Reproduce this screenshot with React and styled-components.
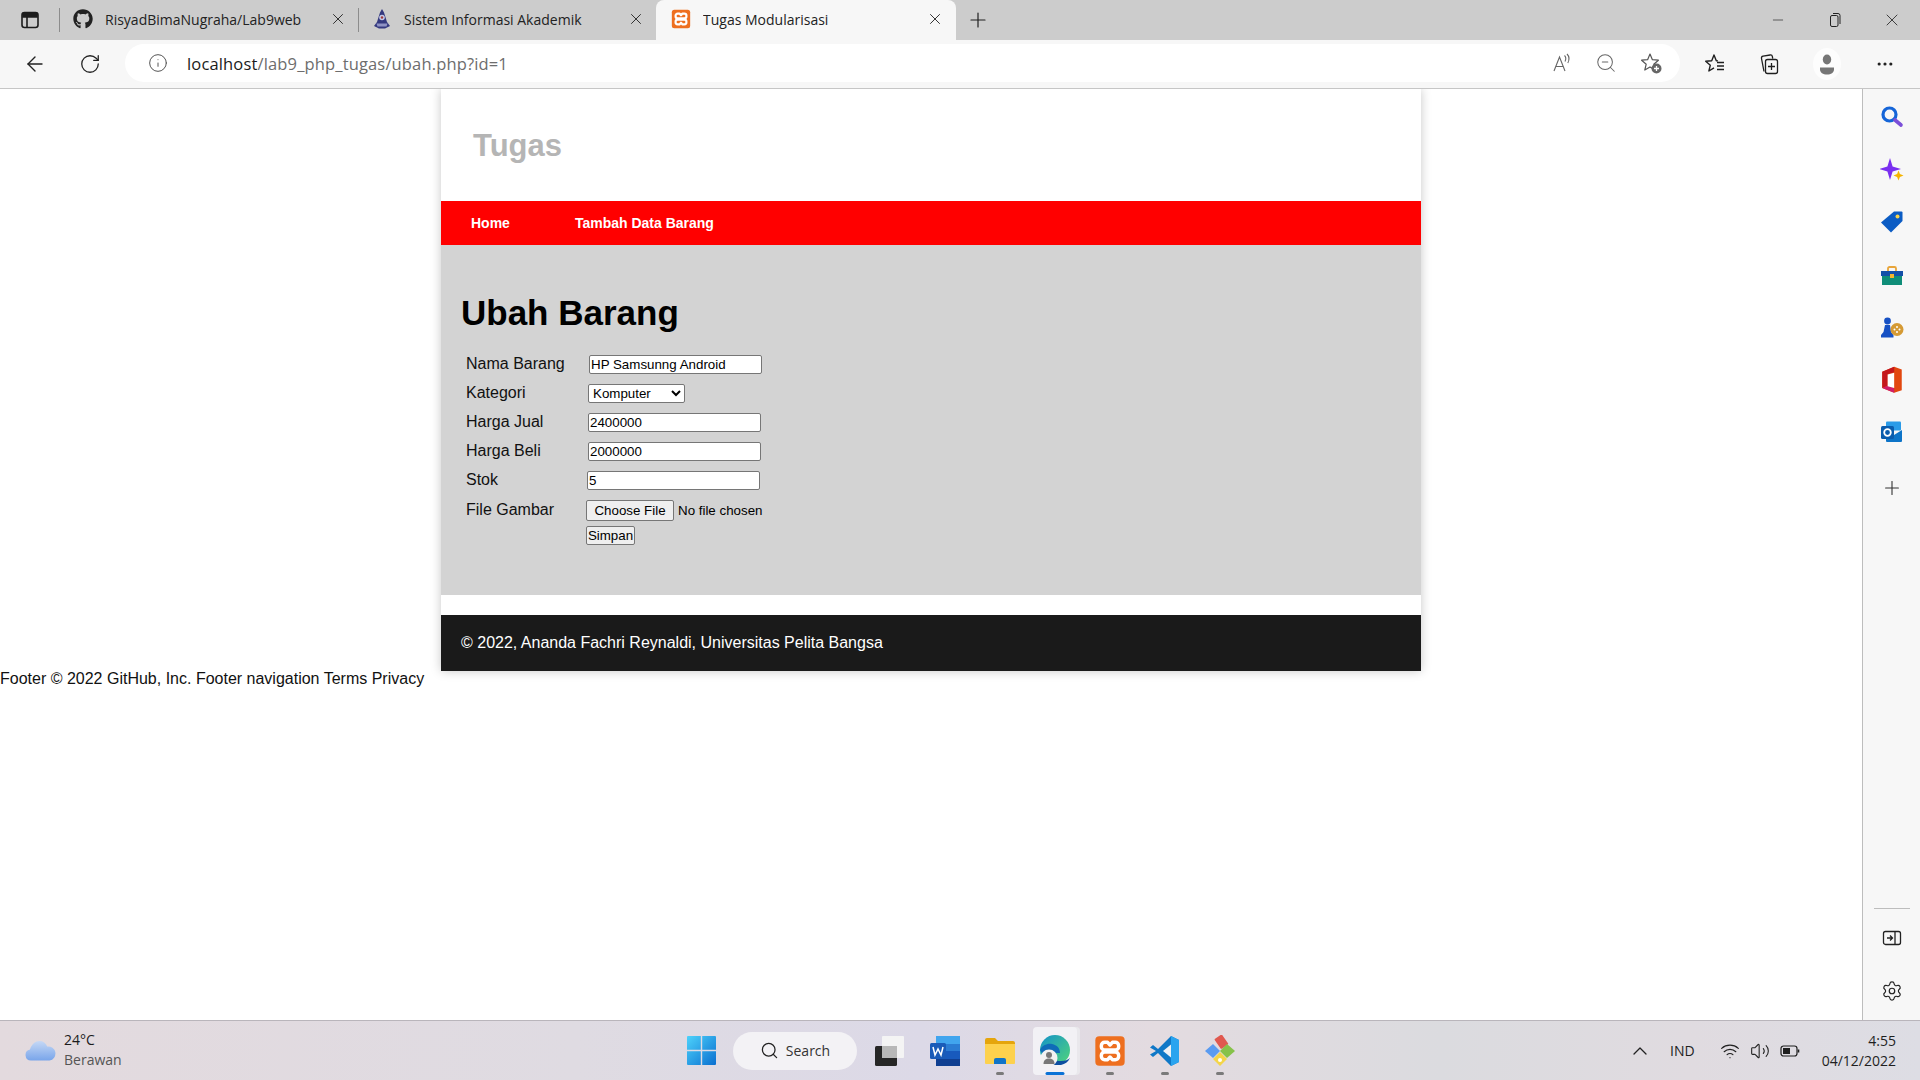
import React from 'react'
import styled, { createGlobalStyle } from 'styled-components'
import {
  ArrowLeft,
  RotateCw,
  Info,
  ZoomOut,
  X,
  Plus,
  Minus,
  ChevronUp,
  Search,
  Settings,
  MoreHorizontal,
  Wifi,
  Volume2,
} from 'lucide-react'
import { FaGithub } from 'react-icons/fa'

const GlobalStyle = createGlobalStyle`
  html, body { margin: 0; padding: 0; background: #fff; overflow: hidden; }
  body { font-family: "Liberation Sans", Arial, sans-serif; color: #000; }
`

const UI_FONT = '"Open Sans", "Noto Sans", sans-serif'

/* ---------- drawn icons ---------- */
const XamppIcon = ({ size = 20 }) => (
  <svg width={size} height={size} viewBox="0 0 24 24">
    <rect x="1" y="1" width="22" height="22" rx="3" fill="#ee6f1f" />
    <g fill="none" stroke="#fff" strokeWidth="2.6" strokeLinejoin="round">
      <path d="M8 5.500h2.200l1.800 2 1.800-2H16a2.500 2.500 0 0 1 2.500 2.500v.8a2.500 2.500 0 0 1-2.500 2.500H8a2.500 2.500 0 0 1-2.500-2.500V8A2.500 2.500 0 0 1 8 5.500z" />
      <path d="M8 18.500h2.200l1.800-2 1.800 2H16a2.500 2.500 0 0 0 2.500-2.500v-.8a2.500 2.500 0 0 0-2.500-2.500H8a2.500 2.500 0 0 0-2.500 2.500v.8A2.500 2.500 0 0 0 8 18.500z" />
    </g>
  </svg>
)

const CrestIcon = () => (
  <svg width="20" height="20" viewBox="0 0 20 20">
    <path d="M10 0l2 3.500 3 9.500 3 4-5 2.500H7L2 17l3-4 3-9.500z" fill="#34397f" />
    <circle cx="10" cy="8.500" r="2.800" fill="#c5c8e6" />
    <circle cx="10" cy="8.500" r="1.200" fill="#a13a3a" />
    <path d="M4.500 14.500h11l-1 3H5.500z" fill="#8f93c4" />
  </svg>
)

const WindowTabsIcon = () => (
  <svg width="20" height="20" viewBox="0 0 20 20" fill="none" stroke="#1c1c1c" strokeWidth="1.600">
    <rect x="2" y="2.500" width="16" height="15" rx="2.500" />
    <path d="M3 3.500h14v3.500H3z" fill="#1c1c1c" />
    <path d="M7 7v10" />
  </svg>
)

const RestoreIcon = () => (
  <svg width="14" height="16" viewBox="0 0 14 16" fill="none" stroke="#222" strokeWidth="1">
    <rect x="2.500" y="3.500" width="7.500" height="11" rx="1.500" />
    <path d="M5 1.500h5a2 2 0 0 1 2 2v8.500" />
  </svg>
)

const ReadAloudIcon = () => (
  <svg width="22" height="22" viewBox="0 0 22 22" fill="none" stroke="#666" strokeWidth="1.100">
    <path d="M3 19L8.500 5 14 19M5 14.500h7" />
    <path d="M13.500 3.500c1.500 1.500 1.500 4 .5 6M16 2c2.300 2.400 2.300 6.200 .8 9" />
  </svg>
)

const FavAddIcon = () => (
  <svg width="24" height="24" viewBox="0 0 24 24">
    <path d="M11 3l2.400 5.700 6 .5-4.600 4 1.400 5.800-5.200-3.100-5.200 3.100 1.400-5.800-4.600-4 6-.5z" fill="none" stroke="#555" strokeWidth="1.200" strokeLinejoin="round" />
    <circle cx="17.500" cy="17.500" r="5" fill="#666" />
    <path d="M17.500 15v5M15 17.500h5" stroke="#fff" strokeWidth="1.300" />
  </svg>
)

const FavListIcon = () => (
  <svg width="24" height="24" viewBox="0 0 24 24" fill="none" stroke="#1f1f1f" strokeWidth="1.400" strokeLinejoin="round">
    <path d="M15 8.900l-1.700-.2L11 3 8.700 8.700l-6 .5 4.600 4-1.400 5.800 5.100-3.100" />
    <path d="M14 10.500h7M14 14h7M14 17.500h7" />
  </svg>
)

const CollectionsIcon = () => (
  <svg width="24" height="24" viewBox="0 0 24 24" fill="none" stroke="#1f1f1f" strokeWidth="1.300">
    <path d="M7 19.500L4.500 6.500a2 2 0 0 1 1.600-2.300l7-1.200a2 2 0 0 1 2.300 1.600l.3 2" />
    <rect x="8.500" y="7.500" width="12" height="14" rx="2" />
    <path d="M14.500 11v7M11 14.500h7" />
  </svg>
)

const ProfileIcon = () => (
  <svg width="28" height="32" viewBox="0 0 28 32">
    <ellipse cx="14" cy="16" rx="14" ry="16" fill="#fdfdfd" />
    <ellipse cx="14" cy="11.500" rx="4.200" ry="5" fill="#767676" />
    <path d="M7 19.500h14v2c0 3-3 5-7 5s-7-2-7-5z" fill="#767676" />
  </svg>
)

const SearchAppIcon = () => (
  <svg width="24" height="24" viewBox="0 0 24 24" fill="none">
    <circle cx="9.500" cy="9.500" r="6.500" stroke="#1565d8" strokeWidth="3.200" />
    <path d="M15 15l6 5" stroke="#7b4fd8" strokeWidth="3.600" strokeLinecap="round" />
  </svg>
)

const SparkIcon = () => (
  <svg width="24" height="24" viewBox="0 0 24 24">
    <path d="M10 0l2.600 8.400L21 11l-8.400 2.600L10 22l-2.600-8.400L-1 11l8.400-2.600z" fill="#7a2ff0" />
    <path d="M18.500 12.500l1.400 3.600 3.600 1.400-3.600 1.400-1.400 3.600-1.400-3.600-3.600-1.400 3.600-1.400z" fill="#f5b400" />
  </svg>
)

const TagIcon = () => (
  <svg width="24" height="24" viewBox="0 1 24 24">
    <path d="M14 1.500h7.500a1 1 0 0 1 1 1V11L11 22.500 1 12.500z" fill="#0b5cc4" />
    <circle cx="17.500" cy="6.500" r="2" fill="#f8d44c" />
  </svg>
)

const ToolboxIcon = () => (
  <svg width="24" height="24" viewBox="0 0 24 24">
    <path d="M8 7V4.500A1.500 1.500 0 0 1 9.500 3h5A1.500 1.500 0 0 1 16 4.500V7" fill="none" stroke="#e8a53a" strokeWidth="1.800" />
    <rect x="1" y="7" width="22" height="5" fill="#1450a8" />
    <rect x="2" y="12" width="20" height="9" fill="#0f8d78" />
    <rect x="10" y="10" width="4" height="4" fill="#f5b52e" />
  </svg>
)

const GamesIcon = () => (
  <svg width="24" height="24" viewBox="0 1 24 24">
    <circle cx="7.500" cy="5" r="3.400" fill="#1650c4" />
    <path d="M5 9h5l1 7 2.500 3v2.500H1V19l2.500-3z" fill="#1650c4" />
    <circle cx="17" cy="13.500" r="6.500" fill="#d59a34" />
    <g fill="#fff">
      <circle cx="14.500" cy="13.500" r="1" />
      <circle cx="19.500" cy="13.500" r="1" />
      <circle cx="17" cy="11" r="1" />
      <circle cx="17" cy="16" r="1" />
    </g>
  </svg>
)

const OfficeIcon = () => (
  <svg width="26" height="26" viewBox="0 2 24 24" overflow="visible">
    <path d="M14 0L3 4.500v15L14 24l7-2.500v-19z" fill="#e2470f" />
    <path d="M14 0L3 4.500v15l5-2V6.500l6-1.500z" fill="#c4171d" />
    <path d="M3 19.500L14 24v-4.500l-6-2z" fill="#d01d6a" />
    <path d="M8 7l6-1.500v14L8 18z" fill="#fff" />
  </svg>
)

const OutlookIcon = () => (
  <svg width="24" height="24" viewBox="0 3 24 24" overflow="visible">
    <rect x="6" y="1.500" width="15" height="9" rx="1" fill="#2a9be8" />
    <path d="M6 10l8 5 8-5v11a1 1 0 0 1-1 1H7a1 1 0 0 1-1-1z" fill="#0d74c8" />
    <rect x="1" y="6" width="13" height="13" rx="1.500" fill="#0a5cad" />
    <circle cx="7.500" cy="12.500" r="3.300" fill="none" stroke="#fff" strokeWidth="1.800" />
  </svg>
)

const SplitIcon = () => (
  <svg width="20" height="20" viewBox="0 0 20 20" fill="none" stroke="#222" strokeWidth="1.300">
    <rect x="1.500" y="3.500" width="17" height="13" rx="2" />
    <path d="M13 3.500v13M5 10h5M8 7.500l2.500 2.500L8 12.500" />
  </svg>
)

const CloudIcon = () => (
  <svg width="32" height="22" viewBox="0 0 32 22">
    <defs>
      <linearGradient id="cloud" x1="0" y1="0" x2="0" y2="1">
        <stop offset="0" stopColor="#c5d8f5" />
        <stop offset="1" stopColor="#79a5ea" />
      </linearGradient>
    </defs>
    <path d="M7 20.500a5.500 5.500 0 0 1-1-10.900C7.500 4 11.500 1 15.500 1c3.500 0 6.500 2 7.700 5.500a6.800 6.800 0 0 1 2.300 14z" fill="url(#cloud)" />
  </svg>
)

const WindowsLogo = () => (
  <svg width="29" height="29" viewBox="0 0 29 29">
    <defs>
      <linearGradient id="win" x1="0" y1="0" x2="1" y2="1">
        <stop offset="0" stopColor="#4dd2fb" />
        <stop offset="1" stopColor="#0a6fd0" />
      </linearGradient>
    </defs>
    <path d="M0 1a1 1 0 0 1 1-1h12.800v13.800H0zM15.200 0H28a1 1 0 0 1 1 1v12.800H15.200zM0 15.200h13.800V29H1a1 1 0 0 1-1-1zM15.200 15.200H29V28a1 1 0 0 1-1 1H15.200z" fill="url(#win)" />
  </svg>
)

const TaskViewIcon = () => (
  <svg width="30" height="32" viewBox="0 0 30 32">
    <rect x="0" y="11" width="22" height="20" rx="1.500" fill="#262626" />
    <rect x="7" y="1" width="22" height="22" rx="1" fill="#f4f4f4" />
    <rect x="7" y="11" width="15" height="12" fill="#b8b8b8" />
  </svg>
)

const WordIcon = () => (
  <svg width="30" height="32" viewBox="0 0 30 32">
    <rect x="6" y="1" width="24" height="30" rx="1.500" fill="#2b7cd3" />
    <rect x="6" y="1" width="24" height="8" fill="#41a5ee" />
    <rect x="6" y="16" width="24" height="8" fill="#185abd" />
    <rect x="6" y="24" width="24" height="7" fill="#103f91" />
    <rect x="0" y="8" width="16" height="16" rx="1.500" fill="#1a5bb8" />
    <path d="M3 12l2 8 3-6 3 6 2-8" fill="none" stroke="#fff" strokeWidth="1.500" />
  </svg>
)

const FolderIcon = () => (
  <svg width="30" height="28" viewBox="0 0 30 28">
    <path d="M0 3a2 2 0 0 1 2-2h8l3 3h15a2 2 0 0 1 2 2v4H0z" fill="#e5a50c" />
    <path d="M0 7h30v19a1 1 0 0 1-1 1H1a1 1 0 0 1-1-1z" fill="#fdd14d" />
    <path d="M9 23a2 2 0 0 1 2-2h8a2 2 0 0 1 2 2v4H9z" fill="#1074c8" />
  </svg>
)

const EdgeIcon = () => (
  <svg width="32" height="32" viewBox="0 0 32 32">
    <defs>
      <linearGradient id="edge" x1="0" y1="0" x2="1" y2="1">
        <stop offset="0" stopColor="#1392c9" />
        <stop offset="1" stopColor="#52d67a" />
      </linearGradient>
    </defs>
    <circle cx="16" cy="15" r="15" fill="url(#edge)" />
    <path d="M1 15c2-5 8-7 12-6 5 1 8 4 8 9H3z" fill="#0f6bb8" />
    <path d="M13 30h9c4-1 7-3 9-7-3 3-8 4-18 2z" fill="#0c4ea0" />
    <circle cx="10" cy="23" r="8.500" fill="#f1f1f1" />
    <circle cx="10" cy="20" r="3" fill="#777" />
    <path d="M4.500 29c0-4 2.500-5.500 5.500-5.500s5.500 1.500 5.500 5.500z" fill="#777" />
  </svg>
)

const VsCodeIcon = () => (
  <svg width="30" height="32" viewBox="0 0 30 32">
    <path d="M21 1l8 4v22l-8 4L8 18l-5 4-3-2.500L6 16 0 12.500 3 10l5 4z" fill="#0f78c7" />
    <path d="M21 1l8 4v22l-8 4z" fill="#2aa4ef" />
    <path d="M21 9.500L13 16l8 6.500z" fill="#eef1f5" />
  </svg>
)

const GitGuiIcon = () => (
  <svg width="32" height="32" viewBox="0 0 32 32">
    <rect x="13" y="1" width="9" height="12" rx="1" transform="rotate(-35 17 7)" fill="#e0584f" />
    <path d="M9 9l7 7-7 7-8-7z" fill="#5a9bf0" />
    <path d="M23 9l8 7-8 7-7-7z" fill="#86c24a" />
    <path d="M16 17l7 7-7 7-7-7z" fill="#f4d548" />
    <circle cx="16" cy="25" r="2" fill="#fff" />
  </svg>
)

const BatteryIcon = () => (
  <svg width="20" height="14" viewBox="0 0 20 14" fill="none" stroke="#1f1f1f" strokeWidth="1.200">
    <rect x="1" y="2" width="16" height="10" rx="2.500" />
    <rect x="3" y="4" width="7" height="6" fill="#1f1f1f" stroke="none" />
    <path d="M18.500 5.500v3" strokeWidth="1.600" />
  </svg>
)

/* ---------- browser chrome ---------- */
const Screen = styled.div`
  width: 1920px;
  height: 1080px;
  display: flex;
  flex-direction: column;
  overflow: hidden;
`

const TabBar = styled.div`
  height: 40px;
  flex: none;
  display: flex;
  align-items: stretch;
  background: #cccccc;
`

const TabsButton = styled.div`
  width: 59px;
  flex: none;
  display: flex;
  align-items: center;
  padding-left: 20px;
  box-sizing: border-box;
`

const TabDivider = styled.div`
  width: 1px;
  height: 24px;
  flex: none;
  align-self: center;
  background: #8c8c8c;
`

const Tab = styled.div`
  width: ${(p) => p.$width}px;
  flex: none;
  box-sizing: border-box;
  display: flex;
  align-items: center;
  padding: 0 ${(p) => (p.$active ? 12 : 11)}px 2px ${(p) => (p.$active ? 15 : 13)}px;
  font-family: ${UI_FONT};
  font-size: 14px;
  color: #222;
  background: ${(p) => (p.$active ? '#f7f7f7' : 'transparent')};
  border-radius: ${(p) => (p.$active ? '8px 8px 0 0' : '0')};
`

const TabIcon = styled.span`
  width: 20px;
  height: 20px;
  flex: none;
  display: flex;
  align-items: center;
  justify-content: center;
  margin-right: 12px;
`

const TabTitle = styled.span`
  flex: 1;
  white-space: nowrap;
  overflow: hidden;
`

const NewTab = styled.div`
  width: 44px;
  flex: none;
  display: flex;
  align-items: center;
  justify-content: center;
`

const WindowControls = styled.div`
  margin-left: auto;
  display: flex;
  align-items: center;
`

const WindowButton = styled.div`
  width: 57px;
  height: 40px;
  display: flex;
  align-items: center;
  justify-content: center;
`

const Toolbar = styled.div`
  height: 48px;
  flex: none;
  display: flex;
  align-items: center;
  background: #f7f7f7;
  padding-left: 23px;
  box-sizing: border-box;
`

const NavButton = styled.div`
  width: 24px;
  height: 24px;
  flex: none;
  margin-right: ${(p) => p.$gap}px;
  display: flex;
  align-items: center;
  justify-content: center;
`

const AddressBar = styled.div`
  width: 1555px;
  height: 38px;
  flex: none;
  margin-top: -2px;
  border-radius: 19px;
  background: #fff;
  display: flex;
  align-items: center;
  padding: 0 17px 0 23px;
  box-sizing: border-box;
`

const UrlText = styled.div`
  font-family: ${UI_FONT};
  font-size: 16.5px;
  letter-spacing: 0.15px;
  color: #6d6d6d;
  margin-left: 19px;
  flex: 1;
  span { color: #1b1b1b; }
`

const AddressActions = styled.div`
  display: flex;
  align-items: center;
  gap: 22px;
`

const ToolActions = styled.div`
  display: flex;
  align-items: center;
  gap: 30px;
  margin-left: 23px;
`

const ToolIcon = styled.div`
  width: ${(p) => p.$size || 24}px;
  height: 32px;
  display: flex;
  align-items: center;
  justify-content: center;
`

const Body = styled.div`
  flex: 1;
  min-height: 0;
  display: flex;
  border-top: 1px solid #c6c6c6;
`

const Viewport = styled.div`
  width: 1862px;
  flex: none;
  background: #fff;
  overflow: hidden;
`

const Sidebar = styled.div`
  flex: 1;
  display: flex;
  flex-direction: column;
  align-items: center;
  background: #f7f7f7;
  border-left: 1px solid #bdbdbd;
  padding: 16px 0 17px;
  gap: 29px;
`

const SideIcon = styled.div`
  width: 24px;
  height: 24px;
  display: flex;
  align-items: center;
  justify-content: center;
`

const SideRule = styled.div`
  width: 36px;
  height: 1px;
  background: #bdbdbd;
  margin-top: auto;
  margin-bottom: -12px;
`

/* ---------- page ---------- */
const Container = styled.div`
  width: 980px;
  margin: 0 auto;
  background: #fff;
  box-shadow: 0 0 10px rgba(0, 0, 0, 0.22);
`

const Header = styled.header`
  height: 112px;
  display: flex;
  align-items: center;
  padding: 2px 0 0 32px;
  box-sizing: border-box;
  font-size: 31px;
  font-weight: bold;
  color: #b5b5b5;
`

const Nav = styled.nav`
  height: 44px;
  background: #ff0000;
  display: flex;
  align-items: center;
  gap: 65px;
  padding-left: 30px;
`

const NavLink = styled.a`
  color: #fff;
  font-size: 14px;
  font-weight: bold;
  text-decoration: none;
`

const Content = styled.section`
  height: 350px;
  background: #d3d3d3;
  padding: 47px 20px 0;
  box-sizing: border-box;
`

const Title = styled.h1`
  margin: 0 0 16px;
  font-size: 35px;
  line-height: 42px;
  font-weight: bold;
`

const Row = styled.div`
  display: grid;
  grid-template-columns: 122px 1fr;
  align-items: center;
  height: ${(p) => p.$height || 29}px;
  padding-left: 5px;
  font-size: 16px;
  color: #111;
`

const Label = styled.label`
  margin-top: ${(p) => (p.$flush ? 0 : -2)}px;
`

const Field = styled.div`
  display: flex;
  margin-left: ${(p) => p.$shift || 0}px;
`

const TextInput = styled.input`
  width: ${(p) => p.$width || 173}px;
  height: 19px;
  box-sizing: border-box;
  padding: 1px 1px;
  border: 1px solid #767676;
  border-radius: 2px;
  font-family: "Liberation Sans", Arial, sans-serif;
  font-size: 13.33px;
  background: #fff;
  color: #000;
`

const SelectInput = styled.select`
  width: 97px;
  height: 19px;
  box-sizing: border-box;
  border: 1px solid #767676;
  border-radius: 2px;
  font-family: "Liberation Sans", Arial, sans-serif;
  font-size: 13.33px;
  background: #fff;
  color: #000;
`

const FileInput = styled.input`
  font-family: "Liberation Sans", Arial, sans-serif;
  font-size: 13.33px;
  width: 190px;
  color: #000;

  &::file-selector-button {
    width: 88px;
    height: 21px;
    padding: 0;
    margin-right: 4px;
    font: inherit;
    border: 1px solid #767676;
    border-radius: 2px;
    background: #efefef;
  }
`

const SubmitButton = styled.button`
  width: 49px;
  height: 19px;
  padding: 0;
  font-family: "Liberation Sans", Arial, sans-serif;
  font-size: 13.33px;
  border: 1px solid #767676;
  border-radius: 2px;
  background: #efefef;
  color: #000;
`

const Gap = styled.div`
  height: 20px;
`

const PageFooter = styled.footer`
  height: 56px;
  background: #1a1a1a;
  color: #fff;
  font-size: 16px;
  display: flex;
  align-items: center;
  padding-left: 20px;
`

const StrayFooter = styled.div`
  font-size: 16px;
  line-height: 16px;
  color: #111;
`

/* ---------- taskbar ---------- */
const Taskbar = styled.div`
  height: 60px;
  flex: none;
  display: grid;
  grid-template-columns: 687px auto 1fr;
  align-items: center;
  border-top: 1px solid #b9b5bb;
  box-sizing: border-box;
  background: linear-gradient(90deg, #e3dade 0%, #dfdbe2 30%, #dcd9e7 48%, #e3dbe0 60%, #dbdbdf 75%, #e0dbe0 88%, #dddde4 100%);
  font-family: ${UI_FONT};
`

const Weather = styled.div`
  display: flex;
  align-items: center;
  gap: 8px;
  padding-left: 24px;
`

const WeatherText = styled.div`
  font-size: 14px;
  line-height: 20px;
  margin-top: -2px;
  color: #1c1c1c;
  small { display: block; font-size: 14px; color: #555; }
`

const TaskCenter = styled.div`
  display: flex;
  align-items: center;
`

const StartButton = styled.div`
  display: flex;
  margin-right: 17px;
`

const SearchPill = styled.div`
  width: 124px;
  height: 38px;
  border-radius: 19px;
  background: #f3f2f5;
  display: flex;
  align-items: center;
  justify-content: center;
  gap: 7px;
  font-size: 14px;
  color: #333;
  margin-right: 11px;
`

const TaskSlot = styled.div`
  position: relative;
  width: 44px;
  height: 48px;
  margin-right: 11px;
  display: flex;
  align-items: center;
  justify-content: center;
  border-radius: 4px;
  background: ${(p) => (p.$active ? '#f2f1f5' : 'transparent')};
  box-shadow: ${(p) => (p.$active ? '3px 0 0 #e9e8ec' : 'none')};

  &::after {
    content: ${(p) => (p.$open || p.$active ? "''" : 'none')};
    position: absolute;
    left: 50%;
    bottom: 0;
    transform: translateX(-50%);
    width: ${(p) => (p.$active ? 19 : 8)}px;
    height: 3px;
    border-radius: 2px;
    background: ${(p) => (p.$active ? '#0a72d6' : '#7a7a7a')};
  }
`

const Tray = styled.div`
  display: flex;
  align-items: center;
  justify-content: flex-end;
  padding-right: 24px;
  font-size: 14px;
  color: #222;
`

const TrayItem = styled.div`
  display: flex;
  align-items: center;
  margin-right: ${(p) => p.$gap}px;
`

const Clock = styled.div`
  text-align: right;
  font-size: 14px;
  line-height: 20px;
  color: #1f1f1f;
`

const thin = { strokeWidth: 1.2, color: '#1f1f1f' }

export default function App() {
  return (
    <>
      <GlobalStyle />
      <Screen>
        <TabBar>
          <TabsButton>
            <WindowTabsIcon />
          </TabsButton>
          <TabDivider />
          <Tab $width={298}>
            <TabIcon>
              <FaGithub size={20} color="#222" />
            </TabIcon>
            <TabTitle>RisyadBimaNugraha/Lab9web</TabTitle>
            <X size={18} {...thin} />
          </Tab>
          <TabDivider />
          <Tab $width={297}>
            <TabIcon>
              <CrestIcon />
            </TabIcon>
            <TabTitle>Sistem Informasi Akademik</TabTitle>
            <X size={18} {...thin} />
          </Tab>
          <Tab $width={300} $active>
            <TabIcon>
              <XamppIcon />
            </TabIcon>
            <TabTitle>Tugas Modularisasi</TabTitle>
            <X size={18} {...thin} />
          </Tab>
          <NewTab>
            <Plus size={24} strokeWidth={1.2} color="#1f1f1f" />
          </NewTab>
          <WindowControls>
            <WindowButton>
              <Minus size={16} strokeWidth={1} color="#222" />
            </WindowButton>
            <WindowButton>
              <RestoreIcon />
            </WindowButton>
            <WindowButton>
              <X size={20} strokeWidth={1} color="#222" />
            </WindowButton>
          </WindowControls>
        </TabBar>

        <Toolbar>
          <NavButton $gap={31}>
            <ArrowLeft size={24} strokeWidth={1.4} color="#222" />
          </NavButton>
          <NavButton $gap={23}>
            <RotateCw size={22} strokeWidth={1.4} color="#222" />
          </NavButton>
          <AddressBar>
            <Info size={20} strokeWidth={1.2} color="#555" />
            <UrlText>
              <span>localhost</span>/lab9_php_tugas/ubah.php?id=1
            </UrlText>
            <AddressActions>
              <ReadAloudIcon />
              <ZoomOut size={22} strokeWidth={1.1} color="#666" />
              <FavAddIcon />
            </AddressActions>
          </AddressBar>
          <ToolActions>
            <ToolIcon>
              <FavListIcon />
            </ToolIcon>
            <ToolIcon>
              <CollectionsIcon />
            </ToolIcon>
            <ToolIcon $size={32}>
              <ProfileIcon />
            </ToolIcon>
            <ToolIcon>
              <MoreHorizontal size={20} strokeWidth={1.8} color="#222" />
            </ToolIcon>
          </ToolActions>
        </Toolbar>

        <Body>
          <Viewport>
            <Container>
              <Header>Tugas</Header>
              <Nav>
                <NavLink>Home</NavLink>
                <NavLink>Tambah Data Barang</NavLink>
              </Nav>
              <Content>
                <Title>Ubah Barang</Title>
                <form>
                  <Row>
                    <Label>Nama Barang</Label>
                    <Field $shift={1}>
                      <TextInput defaultValue="HP Samsunng Android" />
                    </Field>
                  </Row>
                  <Row>
                    <Label>Kategori</Label>
                    <Field>
                      <SelectInput defaultValue="Komputer">
                        <option>Komputer</option>
                      </SelectInput>
                    </Field>
                  </Row>
                  <Row>
                    <Label>Harga Jual</Label>
                    <Field>
                      <TextInput defaultValue="2400000" />
                    </Field>
                  </Row>
                  <Row>
                    <Label>Harga Beli</Label>
                    <Field>
                      <TextInput defaultValue="2000000" />
                    </Field>
                  </Row>
                  <Row>
                    <Label>Stok</Label>
                    <Field $shift={-1}>
                      <TextInput defaultValue="5" />
                    </Field>
                  </Row>
                  <Row $height={30}>
                    <Label $flush>File Gambar</Label>
                    <Field $shift={-2}>
                      <FileInput type="file" />
                    </Field>
                  </Row>
                  <Row $height={20}>
                    <span />
                    <Field $shift={-2}>
                      <SubmitButton type="button">Simpan</SubmitButton>
                    </Field>
                  </Row>
                </form>
              </Content>
              <Gap />
              <PageFooter>© 2022, Ananda Fachri Reynaldi, Universitas Pelita Bangsa</PageFooter>
            </Container>
            <StrayFooter>Footer © 2022 GitHub, Inc. Footer navigation Terms Privacy</StrayFooter>
          </Viewport>

          <Sidebar>
            <SideIcon><SearchAppIcon /></SideIcon>
            <SideIcon><SparkIcon /></SideIcon>
            <SideIcon><TagIcon /></SideIcon>
            <SideIcon><ToolboxIcon /></SideIcon>
            <SideIcon><GamesIcon /></SideIcon>
            <SideIcon><OfficeIcon /></SideIcon>
            <SideIcon><OutlookIcon /></SideIcon>
            <SideIcon><Plus size={22} strokeWidth={1.2} color="#333" /></SideIcon>
            <SideRule />
            <SideIcon><SplitIcon /></SideIcon>
            <SideIcon><Settings size={22} strokeWidth={1.3} color="#222" /></SideIcon>
          </Sidebar>
        </Body>

        <Taskbar>
          <Weather>
            <CloudIcon />
            <WeatherText>
              24°C
              <small>Berawan</small>
            </WeatherText>
          </Weather>
          <TaskCenter>
            <StartButton>
              <WindowsLogo />
            </StartButton>
            <SearchPill>
              <Search size={19} strokeWidth={1.6} color="#222" />
              Search
            </SearchPill>
            <TaskSlot><TaskViewIcon /></TaskSlot>
            <TaskSlot><WordIcon /></TaskSlot>
            <TaskSlot $open><FolderIcon /></TaskSlot>
            <TaskSlot $active><EdgeIcon /></TaskSlot>
            <TaskSlot $open><XamppIcon size={32} /></TaskSlot>
            <TaskSlot $open><VsCodeIcon /></TaskSlot>
            <TaskSlot $open><GitGuiIcon /></TaskSlot>
          </TaskCenter>
          <Tray>
            <TrayItem $gap={18}><ChevronUp size={24} strokeWidth={1.3} color="#222" /></TrayItem>
            <TrayItem $gap={25}>IND</TrayItem>
            <TrayItem $gap={10}><Wifi size={20} strokeWidth={1.4} color="#222" /></TrayItem>
            <TrayItem $gap={10}><Volume2 size={20} strokeWidth={1.3} color="#222" /></TrayItem>
            <TrayItem $gap={22}><BatteryIcon /></TrayItem>
            <Clock>
              4:55
              <br />
              04/12/2022
            </Clock>
          </Tray>
        </Taskbar>
      </Screen>
    </>
  )
}
